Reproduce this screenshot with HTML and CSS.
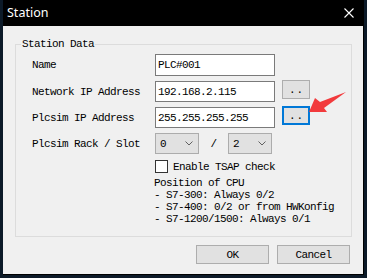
FILE: index.html
```html
<!DOCTYPE html>
<html lang="en">
<head>
    <meta charset="UTF-8">
    <title>Station</title>
    <link rel="stylesheet" href="styles.css">
</head>
<body>
    <div class="window">
        <div class="titlebar">
            <span class="title">Station</span>
            <svg class="close" width="10" height="10" viewBox="0 0 10 10">
                <path d="M0.5 0.5 L9.5 9.5 M9.5 0.5 L0.5 9.5" stroke="#fff" stroke-width="1.1" fill="none"/>
            </svg>
        </div>

        <div class="content">
            <fieldset class="group">
                <legend>Station Data</legend>

                <div class="group-body">
                    <div class="form">
                        <span class="label">Name</span>
                        <div class="input name-input">PLC#001</div>
                        <span></span>

                        <span class="label">Network IP Address</span>
                        <div class="input">192.168.2.115</div>
                        <div class="btn small">..</div>

                        <span class="label">Plcsim IP Address</span>
                        <div class="input">255.255.255.255</div>
                        <div class="btn small focused">..</div>

                        <span class="label">Plcsim Rack / Slot</span>
                        <div class="rack">
                            <div class="combo">0
                                <svg width="8" height="5" viewBox="0 0 8 5"><path d="M0.5 0.5 L4 4 L7.5 0.5" stroke="#606060" fill="none"/></svg>
                            </div>
                            <span class="slash">/</span>
                            <div class="combo">2
                                <svg width="8" height="5" viewBox="0 0 8 5"><path d="M0.5 0.5 L4 4 L7.5 0.5" stroke="#606060" fill="none"/></svg>
                            </div>
                        </div>
                    </div>

                    <div class="extra">
                        <div class="check-row">
                            <span class="checkbox"></span>
                            <span>Enable TSAP check</span>
                        </div>
                        <div class="notes">
                            <div>Position of CPU</div>
                            <div>- S7-300: Always 0/2</div>
                            <div>- S7-400: 0/2 or from HWKonfig</div>
                            <div>- S7-1200/1500: Always 0/1</div>
                        </div>
                    </div>
                </div>
            </fieldset>

            <div class="actions">
                <div class="btn">OK</div>
                <div class="btn">Cancel</div>
            </div>
        </div>
    </div>

    <!-- red arrow drawn over the dialog -->
    <svg class="arrow" width="40" height="24" viewBox="0 0 40 24">
        <polygon points="1,20 7,6 12,10 38,0 16,16 19,20" fill="#f23a3c"/>
    </svg>
</body>
</html>
```

FILE: styles.css
```css
/* Dialog window on a dark desktop */
body, html {
    margin: 0;
    padding: 0;
    background: #0c1a28;
}

body {
    width: 367px;
    height: 278px;
    overflow: hidden;
}

.window {
    margin-left: 3px;
    width: 361px;
    background: #000;
    border-bottom: 1px solid #000;
}

.titlebar {
    height: 26px;
    display: flex;
    align-items: center;
    justify-content: space-between;
    padding: 0 10px 0 4px;
    box-sizing: border-box;
}

.title {
    color: #fff;
    font-family: "Noto Sans", sans-serif;
    font-size: 12.5px;
    margin-top: -1px;
}

.close {
    margin-top: -1px;
}

.content {
    width: 360px;
    height: 248px;
    box-sizing: border-box;
    background: #f0f0f0;
    padding: 12px 12px 0 12px;
    font-family: "Liberation Mono", monospace;
    font-size: 11px;
    letter-spacing: -0.6px;
    color: #000;
}

.group {
    margin: 0;
    width: 337px;
    box-sizing: border-box;
    border: 1px solid #dcdcdc;
    padding: 4px 15px 11px 0;
    min-width: 0;
}

.group legend {
    margin-left: 5px;
    padding: 0 1px;
    line-height: 12px;
}

.group-body {
    padding-left: 16px;
}

.form {
    display: grid;
    grid-template-columns: 123px 120px 35px;
    grid-template-rows: 22px 21px 21px 21px;
    row-gap: 5px;
    align-items: center;
}

.label {
    line-height: 12px;
}

.input {
    height: 100%;
    box-sizing: border-box;
    background: #fff;
    border: 1px solid #7a7a7a;
    padding: 0 2px;
    display: flex;
    align-items: center;
}

.btn {
    box-sizing: border-box;
    background: #e1e1e1;
    border: 1px solid #adadad;
    display: flex;
    align-items: center;
    justify-content: center;
}

.btn.small {
    width: 28px;
    height: 19px;
    margin-left: 7px;
    align-self: start;
    margin-top: -1px;
    letter-spacing: 1px;
    padding-left: 1px;
}

.btn.focused {
    border: 2px solid #0078d7;
}

.rack {
    grid-column: 2 / 4;
    display: flex;
    align-items: center;
    height: 100%;
}

.combo {
    width: 44px;
    height: 100%;
    box-sizing: border-box;
    background: #e1e1e1;
    border: 1px solid #acacac;
    display: flex;
    align-items: center;
    justify-content: space-between;
    padding: 0 5px 0 4px;
}

.slash {
    width: 29px;
    text-align: center;
}

.extra {
    padding-left: 123px;
}

.check-row {
    display: flex;
    align-items: center;
    gap: 5px;
    margin-top: 6px;
    height: 13px;
}

.checkbox {
    width: 13px;
    height: 13px;
    box-sizing: border-box;
    background: #fff;
    border: 1px solid #333;
}

.notes {
    margin-top: 4px;
    margin-left: -1px;
    line-height: 12px;
}

.actions {
    display: flex;
    justify-content: flex-end;
    gap: 8px;
    margin-top: 8px;
    padding-right: 1px;
}

.actions .btn {
    width: 73px;
    height: 19px;
}

.arrow {
    position: absolute;
    left: 308px;
    top: 92px;
}
```
